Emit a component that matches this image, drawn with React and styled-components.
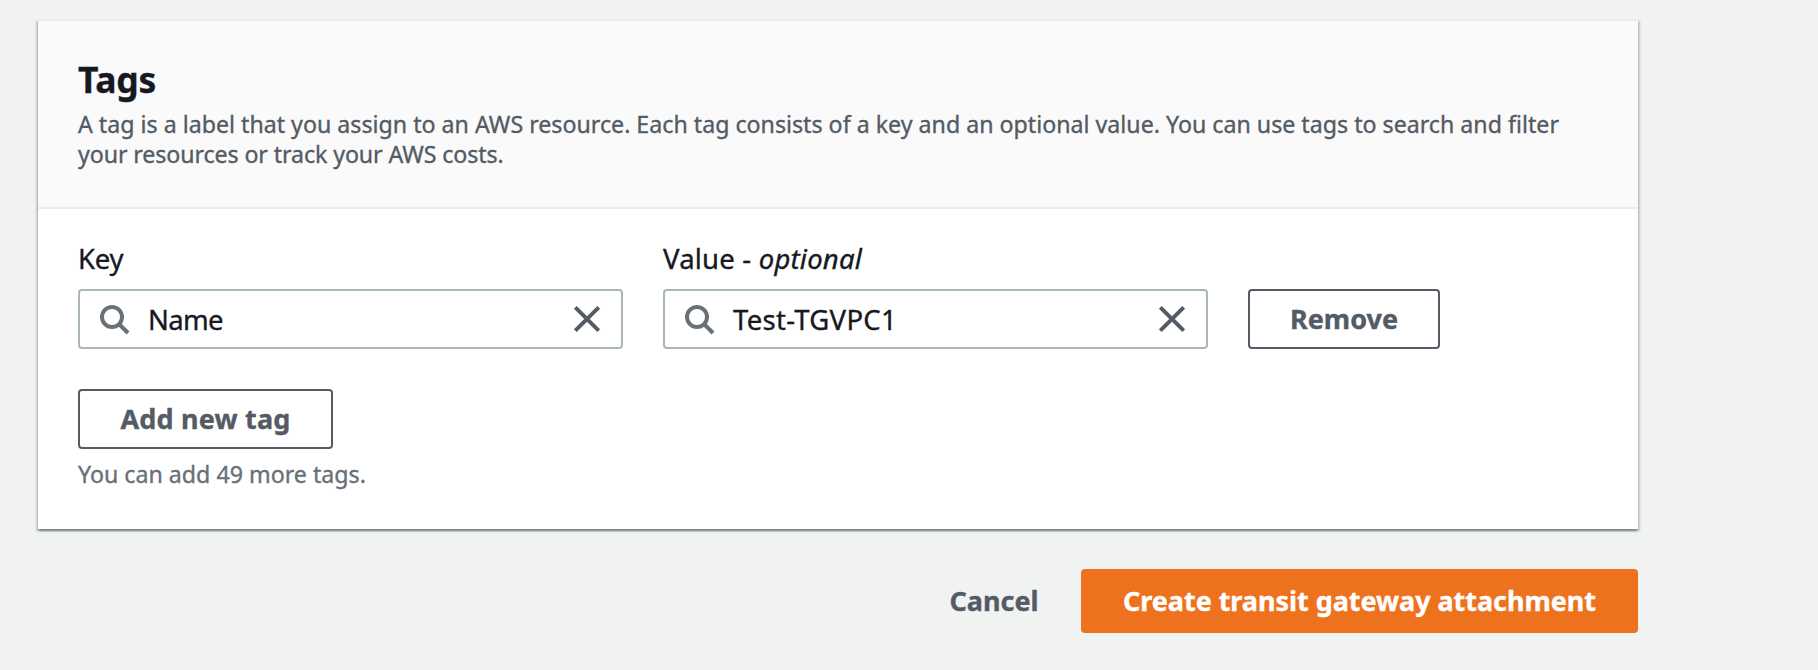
import React from "react";
import styled, { createGlobalStyle } from "styled-components";

const GlobalStyle = createGlobalStyle`
  *, *::before, *::after { box-sizing: border-box; }
  body {
    margin: 0;
    background: #f1f3f3;
    color: #16191f;
    font-family: "Noto Sans", "Open Sans", sans-serif;
    font-size: 27.5px;
    line-height: 34px;
    -webkit-text-stroke: 0.35px currentColor;
  }
`;

const Page = styled.main`
  width: 1638px;
  min-height: 670px;
  padding: 19px 0 37px 38px;
  display: flex;
  flex-direction: column;
  gap: 40px;
`;

const Card = styled.section`
  background: #ffffff;
  box-shadow:
    0 2px 2px 0 rgba(0, 28, 36, 0.35),
    2px 2px 2px 0 rgba(0, 28, 36, 0.15),
    -2px 2px 2px 0 rgba(0, 28, 36, 0.15);
`;

const CardHeader = styled.header`
  padding: 36px 40px 38px;
  border-top: 2px solid #eaeded;
  border-bottom: 2px solid #eaeded;
  background: #fafafa;
`;

const Title = styled.h2`
  margin: 0 0 8px;
  font-size: 35.5px;
  line-height: 44px;
  font-weight: 700;
  letter-spacing: -0.3px;
`;

const SmallText = styled.p`
  margin: 0;
  font-size: 23.2px;
  line-height: 30px;
  color: ${(p) => (p.$muted ? "#687078" : "#545b64")};
`;

const Line = styled.span`
  display: block;
  white-space: nowrap;
  letter-spacing: ${(p) => p.$tracking || "normal"};
`;

const CardBody = styled.div`
  padding: 33px 40px 40px;
  display: flex;
  flex-direction: column;
  gap: 40px;
`;

const TagRow = styled.div`
  display: flex;
  align-items: flex-end;
  gap: 40px;
`;

const Field = styled.label`
  width: 545px;
  display: flex;
  flex-direction: column;
  gap: 13px;
`;

const FieldLabel = styled.span`
  letter-spacing: ${(p) => p.$tracking || "normal"};
`;

const InputBox = styled.span`
  height: 60px;
  padding: 0 20px 0 18px;
  display: flex;
  align-items: center;
  border: 2px solid #aab7b8;
  border-radius: 4px;
  background: #ffffff;
`;

const InputValue = styled.span`
  flex: 1;
  margin-left: 18px;
  padding-top: 1px;
  letter-spacing: ${(p) => p.$tracking || "normal"};
`;

const Icon = styled.svg`
  flex: none;
  fill: none;
  stroke: ${(p) => p.$color};
  stroke-width: 4;
`;

const Button = styled.button`
  width: ${(p) => p.$width}px;
  height: ${(p) => (p.$primary ? 64 : 60)}px;
  padding: 0;
  border: 2px solid ${(p) => (p.$primary ? "#ee721e" : "#545b64")};
  border-radius: 4px;
  background: ${(p) => (p.$primary ? "#ee721e" : "#ffffff")};
  color: ${(p) => (p.$primary ? "#ffffff" : "#545b64")};
  font: 700 27px/34px "Noto Sans", "Open Sans", sans-serif;
  letter-spacing: ${(p) => p.$tracking || "normal"};
  white-space: nowrap;
`;

const LinkButton = styled(Button)`
  border-color: transparent;
  border-width: 0;
  background: transparent;
`;

const AddTag = styled.div`
  display: flex;
  flex-direction: column;
  align-items: flex-start;
  gap: 10px;
`;

const Actions = styled.footer`
  display: flex;
  justify-content: flex-end;
  align-items: center;
  gap: 42px;
`;

function SearchIcon() {
  return (
    <Icon $color="#687078" width="32" height="32" viewBox="0 0 32 32">
      <circle cx="14" cy="14" r="10" />
      <path d="M21 21l9 9" />
    </Icon>
  );
}

function ClearIcon() {
  return (
    <Icon $color="#545b64" width="28" height="28" viewBox="0 0 28 28">
      <path d="M2.3 2.3l23.4 23.4M25.7 2.3L2.3 25.7" />
    </Icon>
  );
}

function SearchField({ label, labelTracking, value, tracking }) {
  return (
    <Field>
      <FieldLabel $tracking={labelTracking}>{label}</FieldLabel>
      <InputBox>
        <SearchIcon />
        <InputValue $tracking={tracking}>{value}</InputValue>
        <ClearIcon />
      </InputBox>
    </Field>
  );
}

export default function App() {
  return (
    <>
      <GlobalStyle />
      <Page>
        <Card>
          <CardHeader>
            <Title>Tags</Title>
            <SmallText>
              <Line>
                A tag is a label that you assign to an AWS resource. Each tag consists of a key and an
                optional value. You can use tags to search and filter
              </Line>
              <Line $tracking="-0.1px">your resources or track your AWS costs.</Line>
            </SmallText>
          </CardHeader>
          <CardBody>
            <TagRow>
              <SearchField label="Key" labelTracking="-0.2px" value="Name" tracking="-0.7px" />
              <SearchField
                label={
                  <>
                    Value - <em>optional</em>
                  </>
                }
                labelTracking="0.2px"
                value="Test-TGVPC1"
                tracking="0.3px"
              />
              <Button $width={192}>Remove</Button>
            </TagRow>
            <AddTag>
              <Button $width={255} $tracking="0.2px">
                Add new tag
              </Button>
              <SmallText $muted>You can add 49 more tags.</SmallText>
            </AddTag>
          </CardBody>
        </Card>
        <Actions>
          <LinkButton $width={90}>Cancel</LinkButton>
          <Button $primary $width={557} $tracking="-0.05px">
            Create transit gateway attachment
          </Button>
        </Actions>
      </Page>
    </>
  );
}
